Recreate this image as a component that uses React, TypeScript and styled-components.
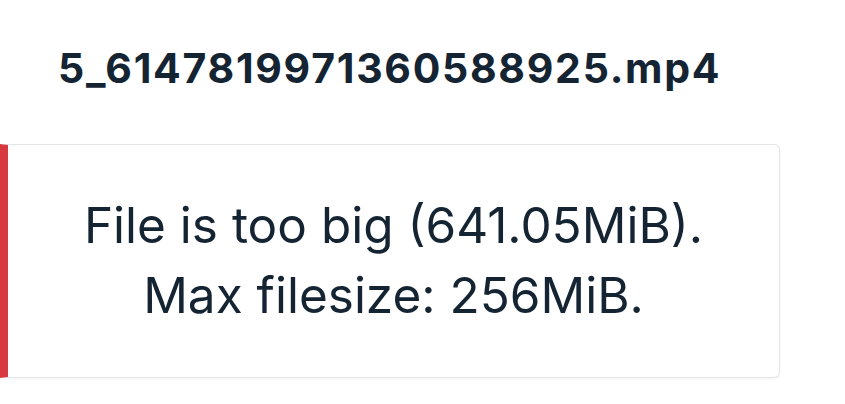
import React from "react";
import styled, { createGlobalStyle } from "styled-components";

const Global = createGlobalStyle`
  html, body { margin: 0; padding: 0; background: #ffffff; }
  body { font-family: Inter, "Noto Sans", sans-serif; color: #152433; }
`;

const Page = styled.div`
  width: 845px;
  height: 404px;
  box-sizing: border-box;
  padding-top: 40px;
  overflow: hidden;
`;

const Title = styled.h1`
  margin: 0 0 48px 58px;
  font-size: 41px;
  line-height: 56px;
  font-weight: 650;
  letter-spacing: 1.72px;
  color: #152433;
`;

const Card = styled.div`
  width: 780px;
  box-sizing: border-box;
  border: 1px solid #e3e5e8;
  border-left: 8px solid #d63a40;
  border-radius: 0 6px 6px 0;
  box-shadow: 0 1px 3px rgba(0, 0, 0, 0.05);
  padding: 45px 20px 47px;
  text-align: center;
`;

const Message = styled.p`
  margin: 0;
  font-size: 49.5px;
  line-height: 70px;
  font-weight: 400;
  color: #152433;
`;

export default function App() {
  return (
    <>
      <Global />
      <Page>
        <Title>5_6147819971360588925.mp4</Title>
        <Card>
          <Message>
            File is too big (641.05MiB).
            <br />
            Max filesize: 256MiB.
          </Message>
        </Card>
      </Page>
    </>
  );
}
